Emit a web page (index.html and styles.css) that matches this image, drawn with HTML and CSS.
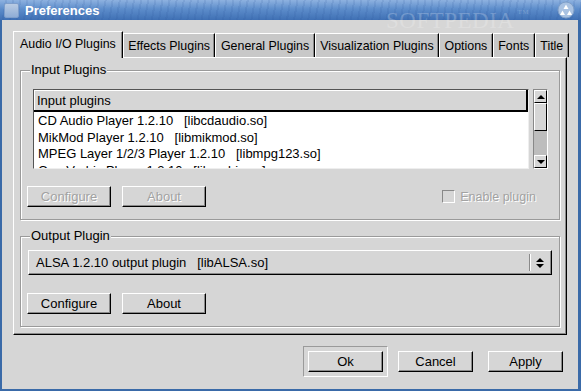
FILE: index.html
```html
<!DOCTYPE html>
<html lang="en">
<head>
    <title>Preferences</title>
    <link rel="stylesheet" href="styles.css">
</head>
<body>
    <div class="window">
        <!-- Title bar -->
        <div class="titlebar">
            <span class="win-icon"></span>
            <span class="win-title">Preferences</span>
            <span class="watermark">SOFTPEDIA<span class="tm">TM</span></span>
            <svg class="win-menu" width="18" height="18" viewBox="0 0 18 18">
                <circle cx="9" cy="9" r="8" fill="#a9c2e2" stroke="#7f9fc8" stroke-width="1"/>
                <polygon points="9,3.5 11.5,8 6.5,8" fill="#fff"/>
                <polygon points="5.5,9.5 8,14 3,14" fill="#fff"/>
                <polygon points="12.5,9.5 15,14 10,14" fill="#fff"/>
            </svg>
        </div>

        <div class="frame">
            <!-- Tabs -->
            <div class="tabs">
                <div class="tab active">Audio I/O Plugins</div>
                <div class="tab">Effects Plugins</div>
                <div class="tab">General Plugins</div>
                <div class="tab">Visualization Plugins</div>
                <div class="tab">Options</div>
                <div class="tab">Fonts</div>
                <div class="tab">Title</div>
            </div>

            <div class="panel">
                <!-- Input plugins group -->
                <fieldset class="group group-input">
                    <legend>Input Plugins</legend>
                    <div class="list-row">
                        <div class="list">
                            <div class="list-head">Input plugins</div>
                            <div class="list-body">
                                <div class="item">CD Audio Player 1.2.10   [libcdaudio.so]</div>
                                <div class="item">MikMod Player 1.2.10   [libmikmod.so]</div>
                                <div class="item">MPEG Layer 1/2/3 Player 1.2.10   [libmpg123.so]</div>
                                <div class="item">Ogg Vorbis Player 1.2.10   [libvorbis.so]</div>
                            </div>
                        </div>
                        <div class="scrollbar">
                            <div class="sb-btn"><span class="arrow-up"></span></div>
                            <div class="sb-thumb"></div>
                            <div class="sb-trough"></div>
                            <div class="sb-btn"><span class="arrow-down"></span></div>
                        </div>
                    </div>
                    <div class="button-row">
                        <button class="btn" disabled>Configure</button>
                        <button class="btn" disabled>About</button>
                        <label class="check disabled"><span class="check-box"></span>Enable plugin</label>
                    </div>
                </fieldset>

                <!-- Output plugin group -->
                <fieldset class="group group-output">
                    <legend>Output Plugin</legend>
                    <div class="combo">
                        <span class="combo-text">ALSA 1.2.10 output plugin   [libALSA.so]</span>
                        <span class="combo-arrows">
                            <span class="arrow-up"></span>
                            <span class="arrow-down"></span>
                        </span>
                    </div>
                    <div class="button-row">
                        <button class="btn">Configure</button>
                        <button class="btn">About</button>
                    </div>
                </fieldset>
            </div>

            <!-- Dialog buttons -->
            <div class="dialog-buttons">
                <div class="focus-frame"><button class="btn small">Ok</button></div>
                <button class="btn small">Cancel</button>
                <button class="btn small">Apply</button>
            </div>
        </div>
    </div>
</body>
</html>
```

FILE: styles.css
```css
body {
    margin: 0;
    font-family: "Liberation Sans", Arial, sans-serif;
    font-size: 13px;
    color: #000;
    background: #d6d6d6;
}

.window {
    width: 581px;
    height: 391px;
    display: flex;
    flex-direction: column;
    overflow: hidden;
    position: relative;
}

/* Title bar */
.titlebar {
    height: 20px;
    display: flex;
    align-items: center;
    padding: 0 6px 0 4px;
    background:
        repeating-linear-gradient(100deg, rgba(255, 255, 255, 0) 0, rgba(255, 255, 255, 0) 5px, rgba(40, 80, 150, 0.12) 5px, rgba(40, 80, 150, 0.12) 7px),
        linear-gradient(#8eb2e0, #5d8dcb 45%, #3f70b4 100%);
}

.win-icon {
    width: 15px;
    height: 15px;
    border-radius: 2px;
    background: linear-gradient(#b9cbe3, #8fadd6);
    border: 1px solid #7e9ecb;
    box-sizing: border-box;
}

.win-title {
    margin-left: 6px;
    color: #fff;
    font-weight: bold;
    font-size: 13px;
    flex: 1;
}

.win-menu {
    display: block;
}

.watermark {
    position: absolute;
    left: 386px;
    top: 8px;
    font-family: "Liberation Serif", serif;
    font-size: 23px;
    letter-spacing: 0.5px;
    color: rgba(255, 255, 255, 0.22);
}

.watermark .tm {
    font-size: 7px;
    vertical-align: top;
    margin-left: 3px;
}

/* Window body */
.frame {
    flex: 1;
    display: flex;
    flex-direction: column;
    padding: 11px 11px 0;
    border-left: 2px solid #3a6aa8;
    border-right: 3px solid #3a6aa8;
    border-bottom: 2px solid #3a6aa8;
    background: #d6d6d6;
}

/* Tabs */
.tabs {
    display: flex;
    align-items: flex-end;
    height: 26px;
    font-size: 12.4px;
}

.tab {
    height: 24px;
    line-height: 24px;
    padding: 0 4.5px;
    box-sizing: border-box;
    background: #c8c8c8;
    border-top: 1px solid #fff;
    border-left: 1px solid #fff;
    border-right: 1px solid #000;
    box-shadow: inset -1px 0 0 #8a8a8a;
    white-space: nowrap;
}

.tab.active {
    height: 27px;
    line-height: 25px;
    padding: 0 6px;
    margin-bottom: -1px;
    background: #d6d6d6;
    position: relative;
    z-index: 1;
}

/* Panel */
.panel {
    height: 278px;
    box-sizing: border-box;
    display: flex;
    flex-direction: column;
    gap: 9px;
    padding: 5px 6px 0;
    border: 1px solid;
    border-color: #fff #000 #000 #fff;
    box-shadow: inset -1px -1px 0 #8a8a8a;
}

.group {
    margin: 0;
    border: 1px solid #9a9a9a;
    box-shadow: inset 1px 1px 0 #fff, 1px 1px 0 #fff;
    min-width: 0;
}

.group legend {
    padding: 0 1px;
    margin-left: 3px;
    line-height: 14px;
    background: #d6d6d6;
}

.group-input {
    padding: 12px 11px 12px 6px;
}

.group-output {
    padding: 7px 6px 12px 6px;
}

/* List view */
.list-row {
    display: flex;
    gap: 4px;
    margin-left: 6px;
    height: 80px;
}

.list {
    flex: 1;
    display: flex;
    flex-direction: column;
    border: 1px solid;
    border-color: #555 #eee #eee #555;
    background: #fff;
    overflow: hidden;
}

.list-head {
    height: 22px;
    line-height: 21px;
    padding-left: 3px;
    box-sizing: border-box;
    background: #d6d6d6;
    border-right: 2px solid #000;
    border-bottom: 2px solid #000;
    box-shadow: inset 1px 1px 0 #fff;
}

.list-body {
    padding: 1px 4px 0;
}

.item {
    line-height: 16.5px;
    white-space: pre;
}

/* Scrollbar */
.scrollbar {
    width: 15px;
    display: flex;
    flex-direction: column;
    box-sizing: border-box;
    border: 1px solid;
    border-color: #888 #fff #fff #888;
    background: #bdbdbd;
}

.sb-btn,
.sb-thumb {
    background: #d6d6d6;
    border: 1px solid;
    border-color: #fff #000 #000 #fff;
    box-sizing: border-box;
}

.sb-btn {
    height: 13px;
    display: flex;
    align-items: center;
    justify-content: center;
}

.sb-thumb {
    height: 28px;
}

.sb-trough {
    flex: 1;
}

.arrow-up,
.arrow-down {
    width: 0;
    height: 0;
    border-left: 4px solid transparent;
    border-right: 4px solid transparent;
}

.arrow-up {
    border-bottom: 4px solid #000;
}

.arrow-down {
    border-top: 4px solid #000;
}

/* Buttons */
.button-row {
    display: flex;
    align-items: center;
    gap: 11px;
    margin-top: 17px;
}

.group-output .button-row {
    margin-top: 18px;
}

.btn {
    width: 84px;
    height: 21px;
    padding: 0;
    font-family: inherit;
    font-size: 13px;
    color: #000;
    background: #d6d6d6;
    border: 1px solid;
    border-color: #fff #000 #000 #fff;
    box-shadow: inset -1px -1px 0 #8a8a8a;
}

.btn:disabled {
    color: #a2a2a2;
    text-shadow: 1px 1px 0 #fff;
}

.btn.small {
    width: 75px;
}

.check {
    margin-left: auto;
    margin-right: 12px;
    display: flex;
    align-items: center;
    gap: 5px;
    font-size: 12.5px;
}

.check.disabled {
    color: #a2a2a2;
    text-shadow: 1px 1px 0 #fff;
}

.check-box {
    width: 13px;
    height: 13px;
    box-sizing: border-box;
    border: 1px solid;
    border-color: #888 #fff #fff #888;
    background: #d6d6d6;
}

/* Combo box */
.combo {
    height: 25px;
    margin: 0 1px;
    display: flex;
    align-items: center;
    box-sizing: border-box;
    background: #d6d6d6;
    border: 1px solid;
    border-color: #fff #000 #000 #fff;
    box-shadow: inset -1px -1px 0 #8a8a8a;
}

.combo-text {
    flex: 1;
    padding-left: 7px;
    white-space: pre;
}

.combo-arrows {
    width: 18px;
    height: 17px;
    margin-right: 2px;
    display: flex;
    flex-direction: column;
    align-items: center;
    justify-content: center;
    gap: 2px;
    border-left: 1px solid #fff;
    box-shadow: -1px 0 0 #8a8a8a;
}

/* Dialog buttons */
.dialog-buttons {
    display: flex;
    align-items: center;
    justify-content: flex-end;
    gap: 15px;
    margin-top: 11px;
    margin-right: 4px;
}

.focus-frame {
    padding: 4px;
    border: 1px solid;
    border-color: #9a9a9a #fff #fff #9a9a9a;
    margin-right: -5px;
}
```
